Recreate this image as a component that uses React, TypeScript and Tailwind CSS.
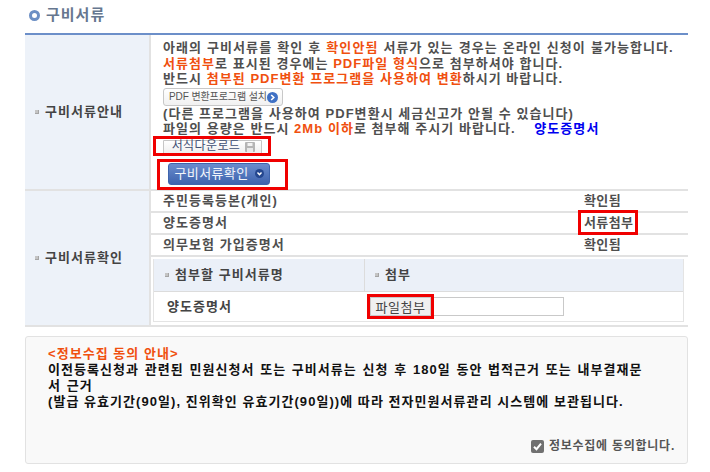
import React from 'react';

const Bullet = () => <span className="mr-[6px] inline-block h-[4px] w-[4px] shrink-0 bg-[#c4c4c4] shadow-[inset_-1px_-1px_0_#a5a5a5]" />;

const Em = ({ children }: { children: React.ReactNode }) => <span className="text-[#f0500f]">{children}</span>;

const RedBox = ({ className }: { className: string }) => (
  <span className={`pointer-events-none absolute border-[3px] border-[#f00000] ${className}`} />
);

const docRows = [
  { name: '주민등록등본(개인)', status: '확인됨' },
  { name: '양도증명서', status: '서류첨부', flagged: true },
  { name: '의무보험 가입증명서', status: '확인됨' },
];

export default function App() {
  return (
    <div className="h-[472px] w-[710px] overflow-hidden bg-white pl-[25px] pr-[22px] font-['Liberation_Sans','Noto_Sans_CJK_KR',sans-serif] text-[13px] font-bold tracking-[1.05px] text-[#4f4f4f]">
      <div className="flex h-[33px] items-center pb-[3px] pl-[4px]">
        <span className="mr-[6px] h-[11px] w-[11px] rounded-full border-[3px] border-[#6c8fc4] bg-white" />
        <h2 className="text-[15px] font-bold tracking-[1px] text-[#66778f]">구비서류</h2>
      </div>

      <div className="border-t-2 border-b-2 border-t-[#6c8fc9] border-b-[#e2e2e2]">
        <div className="flex h-[156px] border-b-2 border-[#e2e2e2]">
          <div className="flex w-[126px] shrink-0 items-center border-r-2 border-[#e2e2e2] bg-[#edf2f9] pl-[10px]">
            <Bullet />
            <span className="text-[#444]">구비서류안내</span>
          </div>
          <div className="relative flex-1 pl-[12px] pt-[5px] leading-[15.7px]">
            <p className="[word-spacing:0.4px]">아래의 구비서류를 확인 후 <Em>확인안됨</Em> 서류가 있는 경우는 온라인 신청이 불가능합니다.</p>
            <p><Em>서류첨부</Em>로 표시된 경우에는 <Em>PDF파일 형식</Em>으로 첨부하셔야 합니다.</p>
            <p>반드시 <Em>첨부된 PDF변환 프로그램을 사용하여 변환</Em>하시기 바랍니다.</p>
            <button className="mt-[1px] flex h-[18px] w-[120px] items-center justify-between rounded-[3px] border border-[#c8c8c8] bg-gradient-to-b from-white to-[#f1f1f1] pl-[5px] pr-[4px] text-[10px] font-normal tracking-[-0.1px] text-[#555]">
              PDF 변환프로그램 설치
              <svg viewBox="0 0 11 11" className="h-[11px] w-[11px]">
                <circle cx="5.5" cy="5.5" r="5.5" fill="#3f70c4" />
                <path d="M4.2 3 6.8 5.5 4.2 8" fill="none" stroke="#fff" strokeWidth="1.6" />
              </svg>
            </button>
            <p>(다른 프로그램을 사용하여 PDF변환시 세금신고가 안될 수 있습니다)</p>
            <p className="-mt-px">파일의 용량은 반드시 <Em>2Mb 이하</Em>로 첨부해 주시기 바랍니다. <span className="ml-[14px] text-[#0000f0]">양도증명서</span></p>
            <button className="mt-[3px] flex h-[15px] w-[99px] items-center justify-center gap-[5px] rounded-b-[2px] border border-[#c6c6c6] bg-gradient-to-b from-white to-[#eeeeee] pl-[2px] text-[12px] font-normal tracking-[0.4px] text-[#3f4f73]">
              서식다운로드
              <svg viewBox="0 0 10 10" className="h-[10px] w-[10px]">
                <rect width="10" height="10" rx="1" fill="#b5b5b5" />
                <rect x="2.5" y="1" width="5" height="3" fill="#f2f2f2" />
                <rect x="2" y="6" width="6" height="4" fill="#e8e8e8" />
              </svg>
            </button>
            <button className="ml-[5px] mt-[8px] flex h-[22px] w-[102px] items-center justify-center gap-[6px] rounded-[3px] border border-[#3f64ad] bg-gradient-to-b from-[#6a8ccc] to-[#3e63ae] text-[13px] font-normal tracking-[0.4px] text-[#f2f5fb]">
              구비서류확인
              <svg viewBox="0 0 9 9" className="h-[9px] w-[9px]">
                <circle cx="4.5" cy="4.5" r="4.5" fill="#24478f" />
                <path d="M2.5 3.5 4.5 5.7 6.5 3.5" fill="none" stroke="#fff" strokeWidth="1.4" />
              </svg>
            </button>
            <RedBox className="left-[2px] top-[101px] h-[20px] w-[118px]" />
            <RedBox className="left-[6px] top-[124px] h-[31px] w-[131px]" />
          </div>
        </div>

        <div className="flex h-[134px]">
          <div className="flex w-[126px] shrink-0 items-center border-r-2 border-[#e2e2e2] bg-[#edf2f9] pl-[10px]">
            <Bullet />
            <span className="text-[#444]">구비서류확인</span>
          </div>
          <div className="flex-1">
            {docRows.map((row) => (
              <div key={row.name} className="flex h-[22px] items-center justify-between border-b-2 border-[#e2e2e2] pl-[12px]">
                <span>{row.name}</span>
                <span className="relative mr-[70px] w-[34px] whitespace-nowrap tracking-[0.4px]">
                  {row.status}
                  {row.flagged && <RedBox className="left-[-6px] top-[-3px] h-[25px] w-[60px]" />}
                </span>
              </div>
            ))}
            <div className="ml-[2px] mr-[4px] mt-[2px] h-[63px] border-x border-b border-[#e4e4e4] text-[#444]">
              <div className="flex h-[33px] border-b border-[#dcdcdc] bg-[#ebf0f8]">
                <div className="flex w-[211px] items-center border-r border-[#dcdcdc] pl-[11px]">
                  <Bullet />첨부할 구비서류명
                </div>
                <div className="flex items-center pl-[10px]">
                  <Bullet />첨부
                </div>
              </div>
              <div className="flex h-[29px] items-center">
                <div className="w-[211px] pl-[13px]">양도증명서</div>
                <div className="relative flex items-center pl-[5px]">
                  <button className="h-[19px] w-[61px] border border-[#c9c9c9] bg-[#f0f0f0] text-[13px] font-normal tracking-[0.5px] text-[#444]">파일첨부</button>
                  <span className="h-[19px] w-[133px] border border-l-0 border-[#c9c9c9] bg-white" />
                  <RedBox className="left-[2px] top-[-3px] h-[25px] w-[67px]" />
                </div>
              </div>
            </div>
          </div>
        </div>
      </div>

      <div className="mt-[9px] h-[128px] rounded-[3px] border border-[#e2e2e2] bg-[#f9f9f9] pl-[22px] pr-[12px] pt-[9px] leading-[16px] text-[#111]">
        <div className="pr-[30px]">
          <p className="text-[#f0500f]">&lt;정보수집 동의 안내&gt;</p>
          <p className="[word-spacing:1px]">이전등록신청과 관련된 민원신청서 또는 구비서류는 신청 후 180일 동안 법적근거 또는 내부결재문서 근거</p>
          <p>(발급 유효기간(90일), 진위확인 유효기간(90일))에 따라 전자민원서류관리 시스템에 보관됩니다.</p>
        </div>
        <div className="mt-[28px] flex items-center justify-end gap-[5px] text-[12px] tracking-[0.75px] text-[#555]">
          <svg viewBox="0 0 13 13" className="h-[13px] w-[13px]">
            <rect width="13" height="13" rx="2" fill="#707070" />
            <path d="M3 6.7 5.5 9.2 10 3.7" fill="none" stroke="#fff" strokeWidth="2" />
          </svg>
          정보수집에 동의합니다.
        </div>
      </div>
    </div>
  );
}
